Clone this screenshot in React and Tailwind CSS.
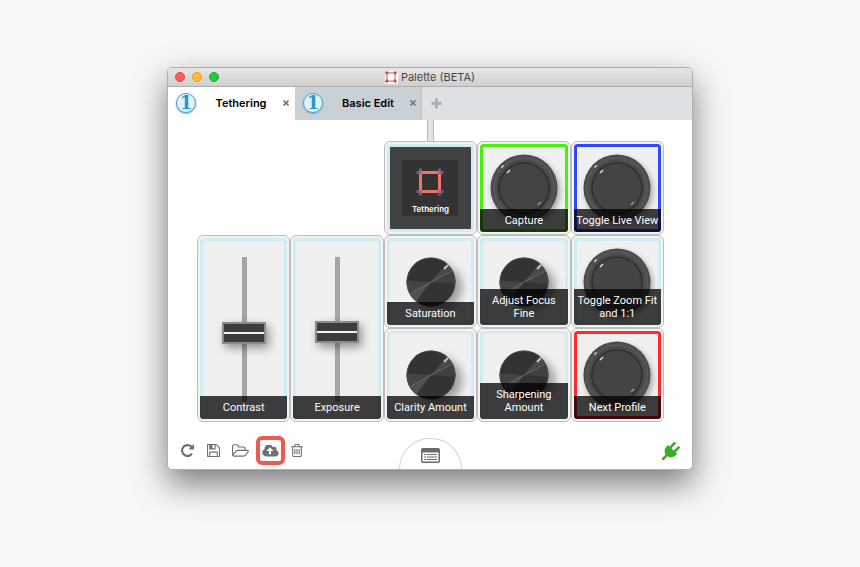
import { useState } from 'react';

const TABS = [
  { key: 'tethering', label: 'Tethering' },
  { key: 'basic-edit', label: 'Basic Edit' },
];

const MODULES = [
  { key: 'contrast', type: 'slider', label: 'Contrast', value: 47, place: 'col-start-1 row-start-2 row-span-2' },
  { key: 'exposure', type: 'slider', label: 'Exposure', value: 48, place: 'col-start-2 row-start-2 row-span-2' },
  { key: 'core', type: 'core', label: 'Tethering', place: 'col-start-3 row-start-1' },
  { key: 'capture', type: 'button', label: 'Capture', color: 'border-[#44f20c]', place: 'col-start-4 row-start-1' },
  { key: 'live-view', type: 'button', label: 'Toggle Live View', color: 'border-[#3347ff]', place: 'col-start-5 row-start-1' },
  { key: 'saturation', type: 'dial', label: 'Saturation', place: 'col-start-3 row-start-2' },
  { key: 'focus', type: 'dial', label: 'Adjust Focus Fine', place: 'col-start-4 row-start-2' },
  { key: 'zoom-fit', type: 'button', label: 'Toggle Zoom Fit and 1:1', place: 'col-start-5 row-start-2' },
  { key: 'clarity', type: 'dial', label: 'Clarity Amount', place: 'col-start-3 row-start-3' },
  { key: 'sharpening', type: 'dial', label: 'Sharpening Amount', place: 'col-start-4 row-start-3' },
  { key: 'next-profile', type: 'button', label: 'Next Profile', color: 'border-[#ff2b2b]', place: 'col-start-5 row-start-3' },
];

const ICONS = {
  reload: {
    box: '0 0 1536 1536',
    d: 'M1536 128v448q0 26-19 45t-45 19h-448q-42 0-59-40-17-39 14-69l138-138q-148-137-349-137-104 0-198.5 40.5t-163.5 109.5-109.5 163.5-40.5 198.5 40.5 198.5 109.5 163.5 163.5 109.5 198.5 40.5q119 0 225-52t179-147q7-10 23-12 15 0 25 9l137 138q9 8 9.5 20.5t-7.5 22.5q-109 132-264 204.5t-327 72.5q-156 0-298-61t-245-164-164-245-61-298 61-298 164-245 245-164 298-61q147 0 284.5 55.5t244.5 156.5l130-129q29-31 70-14 39 17 39 59z',
  },
  save: {
    box: '0 0 1536 1536',
    d: 'M384 1408h768v-384h-768v384zm896 0h128v-896q0-14-10-38.5t-20-34.5l-281-281q-10-10-34-20t-39-10v416q0 40-28 68t-68 28h-576q-40 0-68-28t-28-68v-416h-128v1280h128v-416q0-40 28-68t68-28h832q40 0 68 28t28 68v416zm-384-928v-320q0-13-9.5-22.5t-22.5-9.5h-192q-13 0-22.5 9.5t-9.5 22.5v320q0 13 9.5 22.5t22.5 9.5h192q13 0 22.5-9.5t9.5-22.5zm640 32v928q0 40-28 68t-68 28h-1344q-40 0-68-28t-28-68v-1344q0-40 28-68t68-28h928q40 0 88 20t76 48l280 280q28 28 48 76t20 88z',
  },
  open: {
    box: '0 0 1920 1536',
    d: 'M1781 803q0-35-53-35h-1088q-40 0-85.5 21.5t-71.5 52.5l-294 363q-18 24-18 40 0 35 53 35h1088q40 0 86-22t71-53l294-363q18-22 18-39zm-1141-163h768v-160q0-40-28-68t-68-28h-576q-40 0-68-28t-28-68v-64q0-40-28-68t-68-28h-320q-40 0-68 28t-28 68v853l256-315q44-53 116-87.5t140-34.5zm1269 163q0 62-46 120l-295 363q-43 53-116 87.5t-140 34.5h-1088q-92 0-158-66t-66-158v-960q0-92 66-158t158-66h320q92 0 158 66t66 158v32h544q92 0 158 66t66 158v160h192q54 0 99 24.5t67 70.5q15 32 15 68z',
  },
  upload: {
    box: '0 64 1920 1408',
    d: 'M1280 736q0-14-9-23l-352-352q-9-9-23-9t-23 9l-351 351q-10 12-10 24 0 14 9 23t23 9h224v352q0 13 9.5 22.5t22.5 9.5h192q13 0 22.5-9.5t9.5-22.5v-352h224q13 0 22.5-9.5t9.5-22.5zm640 288q0 159-112.5 271.5t-271.5 112.5h-1088q-185 0-316.5-131.5t-131.5-316.5q0-130 70-240t188-165q-2-30-2-43 0-212 150-362t362-150q156 0 285.5 87t188.5 231q71-62 166-62 106 0 181 75t75 181q0 76-41 138 130 31 213.5 135.5t83.5 238.5z',
  },
  trash: {
    box: '0 0 1408 1536',
    d: 'M512 608v576q0 14-9 23t-23 9h-64q-14 0-23-9t-9-23v-576q0-14 9-23t23-9h64q14 0 23 9t9 23zm256 0v576q0 14-9 23t-23 9h-64q-14 0-23-9t-9-23v-576q0-14 9-23t23-9h64q14 0 23 9t9 23zm256 0v576q0 14-9 23t-23 9h-64q-14 0-23-9t-9-23v-576q0-14 9-23t23-9h64q14 0 23 9t9 23zm128 724v-948h-896v948q0 22 7 40.5t14.5 27 10.5 8.5h832q3 0 10.5-8.5t14.5-27 7-40.5zm-672-1076h448l-48-117q-7-9-17-11h-317q-10 2-17 11zm928 32v64q0 14-9 23t-23 9h-96v948q0 83-47 143.5t-113 60.5h-832q-66 0-113-58.5t-47-141.5v-952h-96q-14 0-23-9t-9-23v-64q0-14 9-23t23-9h309l70-167q15-37 54-63t79-26h320q40 0 79 26t54 63l70 167h309q14 0 23 9t9 23z',
  },
  plug: {
    box: '0 0 1792 1792',
    d: 'M1755 453q37 38 37 90.5t-37 90.5l-401 400 150 150-160 160q-163 163-389.5 186.5t-411.5-100.5l-362 362h-181v-181l362-362q-124-185-100.5-411.5t186.5-389.5l160-160 150 150 400-401q38-37 91-37t90 37 37 90.5-37 90.5l-400 401 234 234 401-400q38-37 91-37t90 37z',
  },
};

function Icon({ name, className }) {
  return (
    <svg viewBox={ICONS[name].box} className={className} fill="currentColor" aria-hidden="true">
      <path d={ICONS[name].d} />
    </svg>
  );
}

function CropMark({ className, frame, corner }) {
  return (
    <svg viewBox="0 0 28 28" className={className} fill="none" aria-hidden="true">
      <path
        d="M4.500 0.500v8M0.500 4.500h8M23.500 0.500v8M19.500 4.500h8M4.500 19.500v8M0.500 23.500h8M23.500 19.500v8M19.500 23.500h8"
        stroke={corner}
        strokeWidth="3"
      />
      <rect x="4.500" y="4.500" width="19" height="19" stroke={frame} strokeWidth="3" />
      <path d="M3 3h3v3H3zM22 3h3v3h-3zM3 22h3v3H3zM22 22h3v3h-3z" fill={corner} opacity="0.600" />
    </svg>
  );
}

function ProfileBadge() {
  return (
    <span className="flex size-5 items-center justify-center rounded-full border border-[#41a9d6] bg-[#e4eff2] font-['DejaVu_Serif',serif] text-lg leading-none font-bold text-[#1c9ad6] shadow-[0_1px_2px_#9aa]">
      1
    </span>
  );
}

function Dial() {
  return (
    <svg viewBox="0 0 88 88" className="size-[88px] shrink-0" aria-hidden="true">
      <defs>
        <filter id="dialShadow" x="-50%" y="-50%" width="200%" height="200%">
          <feGaussianBlur stdDeviation="5" />
        </filter>
      </defs>
      <circle cx="52" cy="49" r="23" fill="#000" opacity="0.350" filter="url(#dialShadow)" />
      <circle cx="44" cy="44" r="24.500" fill="#333" />
      <path d="M44 44L65 31.500A24.500 24.500 0 0 1 68.400 46z" fill="#414141" />
      <path d="M44 44L60 25.500A24.500 24.500 0 0 1 65 31.500z" fill="#4a4a4a" />
      <path d="M44 44L19.600 42.500A24.500 24.500 0 0 0 23 56.500z" fill="#454545" />
      <path d="M44 44L23 56.500A24.500 24.500 0 0 0 29 63.500z" fill="#505050" />
      <path d="M23.500 55.500L44 44L65 33" stroke="#6a6a6a" strokeWidth="1" fill="none" />
      <path d="M57 31l4.500-4.500" stroke="#c4c4c4" strokeWidth="2" />
      <circle cx="44" cy="44" r="24" fill="none" stroke="#555" strokeWidth="1" opacity="0.600" />
    </svg>
  );
}

function ArcadeButton() {
  return (
    <svg viewBox="0 0 88 88" className="size-[88px] shrink-0" aria-hidden="true">
      <defs>
        <filter id="buttonShadow" x="-50%" y="-50%" width="200%" height="200%">
          <feGaussianBlur stdDeviation="3" />
        </filter>
        <radialGradient id="buttonRim">
          <stop offset="0.770" stopColor="#444" />
          <stop offset="0.900" stopColor="#565656" />
          <stop offset="1" stopColor="#454545" />
        </radialGradient>
      </defs>
      <circle cx="46" cy="47" r="33" fill="#000" opacity="0.400" filter="url(#buttonShadow)" />
      <circle cx="44" cy="44" r="33.500" fill="url(#buttonRim)" />
      <circle cx="44" cy="44" r="25" fill="#444" stroke="#303030" strokeWidth="1.500" />
      <path d="M21.500 23.500l2-2M27 29l3-3" stroke="#ddd" strokeWidth="1.500" />
      <path d="M58 61l3-3" stroke="#999" strokeWidth="1.500" />
    </svg>
  );
}

function Fader({ id, value, onChange }) {
  return (
    <input
      id={id}
      type="range"
      min={0}
      max={100}
      value={value}
      onChange={e => onChange(Number(e.target.value))}
      className="mt-4 h-[145px] w-11 shrink-0 appearance-none self-start bg-[linear-gradient(to_right,transparent_20px,#a5a5a5_20px,#a5a5a5_25px,transparent_25px)] [direction:rtl] [writing-mode:vertical-lr] [&::-webkit-slider-thumb]:h-[22px] [&::-webkit-slider-thumb]:w-11 [&::-webkit-slider-thumb]:appearance-none [&::-webkit-slider-thumb]:border-2 [&::-webkit-slider-thumb]:border-[#8b8b8b] [&::-webkit-slider-thumb]:bg-[linear-gradient(#3c3c3c_8px,#f2f2f2_8px,#f2f2f2_10px,#3c3c3c_10px)] [&::-webkit-slider-thumb]:shadow-[3px_4px_10px_rgba(0,0,0,0.4)]"
    />
  );
}

function CoreScreen({ label }) {
  return (
    <div className="flex size-14 flex-col items-center justify-between bg-[#333] pt-2 pb-px text-white">
      <CropMark className="size-7" frame="#ee756a" corner="#7b5583" />
      <span className="text-[8px] leading-3 font-semibold">{label}</span>
    </div>
  );
}

function Module({ module }) {
  const [value, setValue] = useState(module.value);
  const { type, label, place } = module;
  const isCore = type === 'core';
  const Tag = type === 'button' ? 'button' : type === 'slider' ? 'label' : 'div';

  return (
    <div className={`${place} rounded-md border border-[#bdbdbd] bg-[#f3f3f3] p-[2px]`}>
      <Tag className="relative flex size-full overflow-hidden rounded-[3px]">
        <span
          className={`flex size-full items-center justify-center overflow-hidden rounded-[3px] border-3 ${module.color || 'border-[#d1edf2]'} ${isCore ? 'bg-[#424242]' : 'bg-[#f0f0f0]'}`}
        >
          {isCore && <CoreScreen label={label} />}
          {type === 'dial' && <Dial />}
          {type === 'button' && <ArcadeButton />}
          {type === 'slider' && <Fader id={module.key} value={value} onChange={setValue} />}
        </span>
        {!isCore && (
          <span className="absolute inset-x-0 bottom-0 bg-black/75 px-px py-[5px] text-center font-[Roboto,'Liberation_Sans',sans-serif] text-[11px] leading-[13px] text-white">
            {label}
          </span>
        )}
      </Tag>
    </div>
  );
}

function TitleBar() {
  return (
    <header className="grid h-[19px] grid-cols-[1fr_auto_1fr] items-center border-b border-[#adadad] bg-linear-to-b from-[#e6e6e6] to-[#cfcfcf] px-[7px]">
      <div className="flex gap-[7px]">
        <button aria-label="Close" className="size-[10px] rounded-full border border-[#e0443e] bg-[#ff5f57]" />
        <button aria-label="Minimize" className="size-[10px] rounded-full border border-[#dfa023] bg-[#ffbd2e]" />
        <button aria-label="Zoom" className="size-[10px] rounded-full border border-[#1dad2b] bg-[#28c940]" />
      </div>
      <div className="flex items-center gap-[3px]">
        <span className="flex size-[13px] items-center justify-center rounded-xs bg-white">
          <CropMark className="size-3" frame="#f0746a" corner="#5b3a64" />
        </span>
        <h1 className="text-[11px] leading-4 text-[#454545]">Palette (BETA)</h1>
      </div>
    </header>
  );
}

function TabBar({ active, onSelect }) {
  return (
    <nav className="flex h-[33px] bg-[#dde1e4]">
      {TABS.map(tab => (
        <div
          key={tab.key}
          className={`flex w-[127px] items-center border-r pr-[3px] pb-px pl-2 ${active === tab.key ? 'border-white bg-white' : 'border-[#b4c3cc] bg-[#c9d1d7]'}`}
        >
          <ProfileBadge />
          <button onClick={() => onSelect(tab.key)} className="flex-1 pl-[5px] text-center text-[11px] leading-4 font-semibold text-black">
            {tab.label}
          </button>
          <button aria-label={`Close ${tab.label}`} className="flex size-[10px] items-center justify-center text-[#777]">
            <svg viewBox="0 0 6 6" className="size-[6px]" stroke="currentColor" strokeWidth="1.700" aria-hidden="true">
              <path d="M0.500 0.500l5 5M5.500 0.500l-5 5" />
            </svg>
          </button>
        </div>
      ))}
      <button aria-label="Add profile" className="px-[9px] text-[#adb0b1]">
        <svg viewBox="0 0 11 11" className="size-[11px]" stroke="currentColor" strokeWidth="3" aria-hidden="true">
          <path d="M5.500 0.500v10M0.500 5.500h10" />
        </svg>
      </button>
    </nav>
  );
}

function Toolbar() {
  return (
    <footer className="grid h-[47px] grid-cols-[1fr_auto_1fr] items-end px-3">
      <div className="flex items-center pb-1 text-[#707070]">
        <button aria-label="Reload" className="flex px-px">
          <Icon name="reload" className="size-[13px]" />
        </button>
        <button aria-label="Save" className="ml-3 flex">
          <Icon name="save" className="size-[13px]" />
        </button>
        <button aria-label="Open" className="ml-3 flex">
          <Icon name="open" className="h-[14px] w-[17px]" />
        </button>
        <button aria-label="Upload" className="ml-[7px] flex size-[29px] items-center justify-center rounded-md border-4 border-[#ee5a50]">
          <Icon name="upload" className="h-3 w-[17px] shrink-0" />
        </button>
        <button aria-label="Delete" className="ml-[6px] flex">
          <Icon name="trash" className="h-[13px] w-3" />
        </button>
      </div>
      <button
        aria-label="Module list"
        className="flex h-[31px] w-[63px] items-center justify-center rounded-t-full border border-b-0 border-[#cdd5da] pt-[3px]"
      >
        <svg viewBox="0 0 19 15" className="h-[15px] w-[19px]" aria-hidden="true">
          <rect x="0.750" y="0.750" width="17.500" height="13.500" rx="1" fill="#fff" stroke="#6b6b6b" strokeWidth="1.500" />
          <path d="M1 0.500h17V4.500H1z" fill="#6b6b6b" />
          <path d="M3 6.500h2M3 9h2M3 11.500h2M6 6.500h10M6 9h10M6 11.500h10" stroke="#6b6b6b" strokeWidth="1.200" />
        </svg>
      </button>
      <div className="flex justify-end pb-[9px] text-[#3aae2a]">
        <Icon name="plug" className="size-[18px]" />
      </div>
    </footer>
  );
}

export default function App() {
  const [active, setActive] = useState('tethering');

  return (
    <div className="min-h-screen bg-[#f7f7f7] px-4 pt-[67px] pb-16 font-[Inter,'Liberation_Sans',sans-serif]">
      <main className="mx-auto max-w-[526px] overflow-hidden rounded-[5px] border border-[#b0b0b0] bg-white shadow-[0_14px_32px_rgba(0,0,0,0.5)]">
        <TitleBar />
        <TabBar active={active} onSelect={setActive} />
        <div className="mx-auto h-[21px] w-[7px] border-x border-[#bcbcbc] bg-[#e2e2e2]" />
        <div className="pr-7 pl-[29px]">
          <div className="grid h-[281px] grid-cols-5 grid-rows-3">
            {MODULES.map(module => (
              <Module key={module.key} module={module} />
            ))}
          </div>
        </div>
        <Toolbar />
      </main>
    </div>
  );
}
